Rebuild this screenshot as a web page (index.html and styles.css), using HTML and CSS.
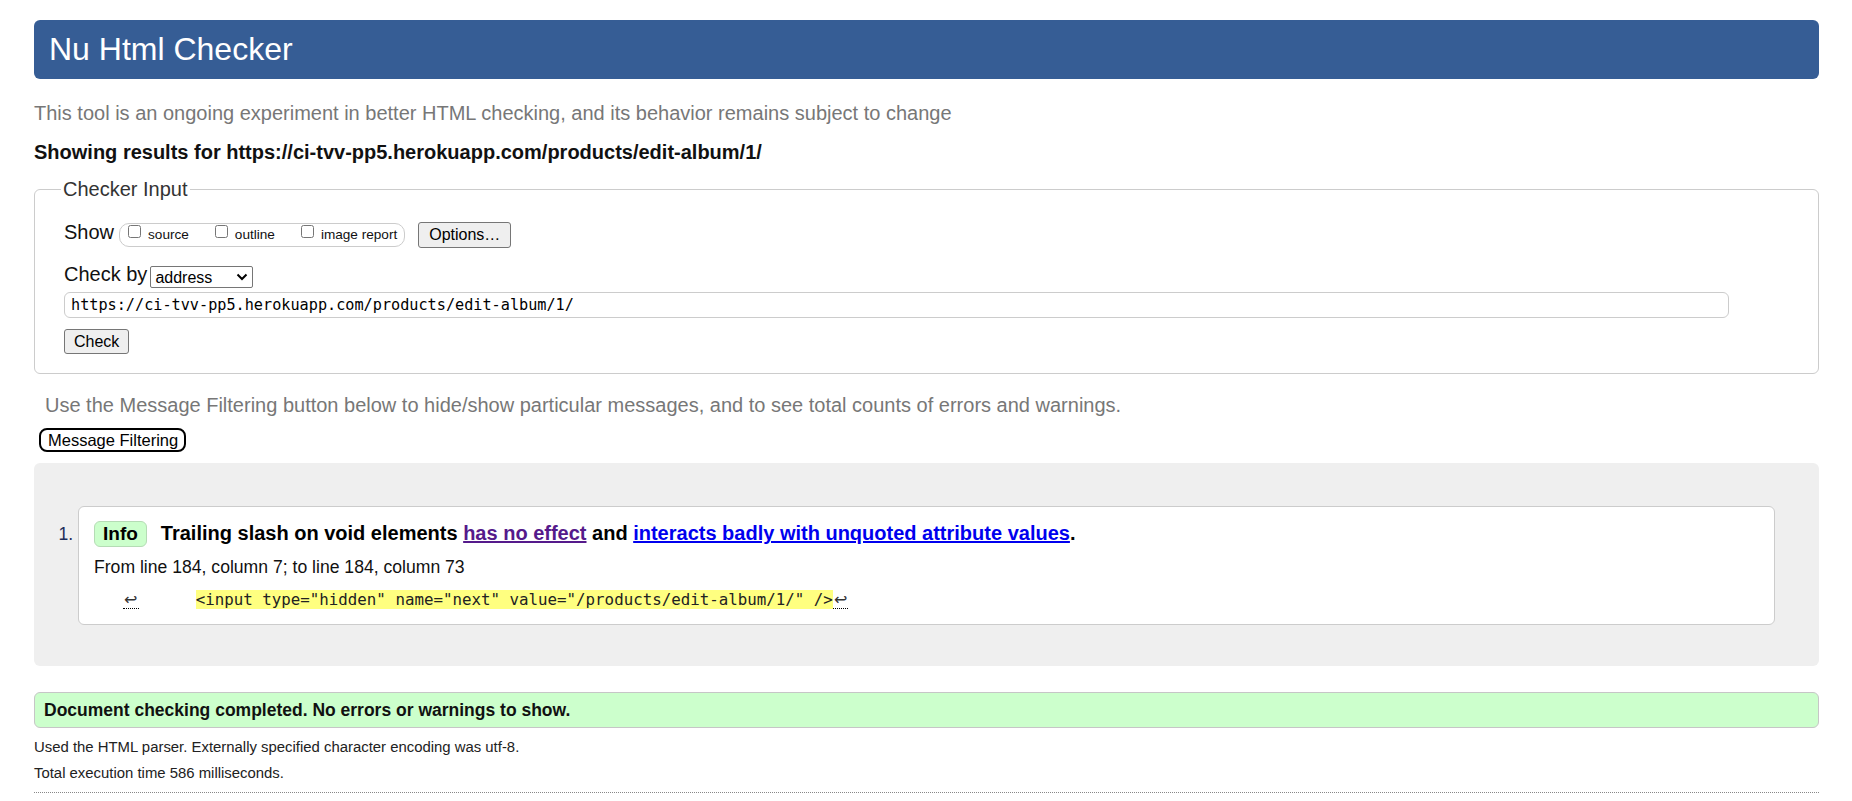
FILE: index.html
```html
<!DOCTYPE html>
<html lang="en">
<head>
<meta charset="utf-8">
<title>Nu Html Checker</title>
<link rel="stylesheet" href="styles.css">
</head>
<body>
<h1 class="title">Nu Html Checker</h1>
<p class="intro">This tool is an ongoing experiment in better HTML checking, and its behavior remains subject to change</p>
<p class="showing">Showing results for https://ci-tvv-pp5.herokuapp.com/products/edit-album/1/</p>
<form class="checker-form">
  <fieldset class="checker">
    <legend class="checker-legend">Checker Input</legend>
    <div class="row show-row">
      <span class="row-label">Show</span>
      <span class="show-pill">
        <label class="opt"><input type="checkbox" class="cb"><span class="opt-text">source</span></label>
        <label class="opt"><input type="checkbox" class="cb"><span class="opt-text">outline</span></label>
        <label class="opt"><input type="checkbox" class="cb"><span class="opt-text">image report</span></label>
      </span>
      <button type="button" class="btn btn-options">Options…</button>
    </div>
    <div class="row checkby-row">
      <span class="row-label">Check by</span>
      <span class="select-wrap">
        <select class="select"><option>address</option></select>
        <svg class="chev" width="12" height="8" viewBox="0 0 12 8"><polyline points="1.5,1.5 6,6 10.5,1.5" fill="none" stroke="#000" stroke-width="2"/></svg>
      </span>
    </div>
    <div class="row url-row">
      <input class="url" type="text" value="https://ci-tvv-pp5.herokuapp.com/products/edit-album/1/">
    </div>
    <div class="row check-row">
      <button type="button" class="btn btn-check">Check</button>
    </div>
  </fieldset>
</form>
<p class="filter-note">Use the Message Filtering button below to hide/show particular messages, and to see total counts of errors and warnings.</p>
<div class="filter-wrap"><button type="button" class="btn-filter">Message Filtering</button></div>
<div class="results">
  <ol class="msgs">
    <li class="msg">
      <div class="msg-head"><strong class="badge">Info</strong><span class="msg-text">Trailing slash on void elements <a class="visited" href="#">has no effect</a> and <a class="link" href="#">interacts badly with unquoted attribute values</a>.</span></div>
      <p class="location">From line 184, column 7; to line 184, column 73</p>
      <p class="extract"><code class="code"><span class="lf">↩</span>      <b class="hl">&lt;input type="hidden" name="next" value="/products/edit-album/1/" /&gt;</b><span class="lf">↩</span></code></p>
    </li>
  </ol>
</div>
<p class="success">Document checking completed. No errors or warnings to show.</p>
<p class="details">Used the HTML parser. Externally specified character encoding was utf-8.</p>
<p class="details details-2">Total execution time 586 milliseconds.</p>
<hr class="dotted">
</body>
</html>
```
FILE: styles.css
```css
html, body {
  margin: 0;
  background: #fff;
}
body {
  padding: 20px 33px 0 34px;
  font-family: "Liberation Sans", Arial, sans-serif;
  font-size: 20px;
  color: #000;
}
.title {
  margin: 0;
  background: #365d95;
  color: #fff;
  font-size: 32px;
  font-weight: normal;
  line-height: 59px;
  padding: 0 15px;
  border-radius: 6px;
}
.intro {
  margin: 23px 0 0;
  color: #777;
  line-height: 23px;
}
.showing {
  margin: 16px 0 0;
  font-weight: bold;
  line-height: 23px;
  color: #111;
}
.checker-form {
  margin: 14px 0 0;
}
.checker {
  margin: 0;
  border: 1px solid #ccc;
  border-radius: 6px;
  padding: 20px 29px 19px 26px;
}
.checker-legend {
  padding: 0 2px;
  font-size: 20px;
  line-height: 23px;
  color: #333;
}
.row {
  padding-left: 3px;
  display: flex;
  align-items: flex-start;
}
.row-label {
  line-height: 23px;
  color: #111;
}
.show-pill {
  margin: 2px 0 0 5px;
  height: 24px;
  box-sizing: border-box;
  border: 1px solid #ccc;
  border-radius: 10px;
  padding: 0 7px 0 8px;
  display: flex;
  gap: 26px;
}
.opt {
  display: flex;
  align-items: flex-start;
}
.cb {
  margin: 1px 7px 0 0;
  width: 13px;
  height: 13px;
}
.opt-text {
  font-size: 13.6px;
  line-height: 16px;
  margin-top: 3px;
  color: #111;
}
.btn {
  font-family: "Liberation Sans", Arial, sans-serif;
  font-size: 16px;
  color: #000;
  background: #efefef;
  border: 1px solid #767676;
  border-radius: 3px;
  box-sizing: border-box;
  margin: 0;
}
.btn-options {
  margin: 1px 0 0 13px;
  height: 26px;
  padding: 0 10px;
}
.checkby-row {
  margin-top: 15px;
}
.select-wrap {
  position: relative;
  margin: 3px 0 0 3px;
  display: block;
  width: 103px;
  height: 22px;
}
.select {
  appearance: none;
  -webkit-appearance: none;
  display: block;
  width: 103px;
  height: 22px;
  box-sizing: border-box;
  border: 1px solid #767676;
  border-radius: 2px;
  background: #fff;
  padding: 0 0 0 4px;
  margin: 0;
  font-family: "Liberation Sans", Arial, sans-serif;
  font-size: 16px;
  color: #000;
}
.chev {
  position: absolute;
  right: 5px;
  top: 7px;
  pointer-events: none;
}
.url-row {
  margin-top: 4px;
}
.url {
  display: block;
  width: calc(100% - 60px);
  height: 26px;
  box-sizing: border-box;
  border: 1px solid #ccc;
  border-radius: 6px;
  padding: 0 6px;
  margin: 0;
  font-family: "DejaVu Sans Mono", "Liberation Mono", monospace;
  font-size: 15.2px;
  color: #000;
  background: #fff;
}
.check-row {
  margin-top: 11px;
}
.btn-check {
  height: 25px;
  padding: 0 9px;
}
.filter-note {
  margin: 20px 0 0;
  padding-left: 11px;
  color: #777;
  line-height: 23px;
}
.filter-wrap {
  margin-top: 11px;
  padding-left: 5px;
}
.btn-filter {
  display: block;
  height: 24px;
  box-sizing: border-box;
  border: 2px solid #000;
  border-radius: 8px;
  background: #fff;
  color: #000;
  font-family: "Liberation Sans", Arial, sans-serif;
  font-size: 16.5px;
  line-height: 20px;
  padding: 0 6px 0 7px;
  margin: 0;
}
.results {
  margin-top: 11px;
  background: #efefef;
  border-radius: 6px;
  padding: 43px 44px 41px 44px;
}
.msgs {
  margin: 0;
  padding: 0;
  list-style: decimal outside;
}
.msg {
  background: #fff;
  border: 1px solid #ccc;
  border-radius: 6px;
  padding: 14px 15px 15px;
  font-size: 16px;
}
.msg::marker {
  color: #1e2d5a;
  font-size: 17.6px;
}
.msg-head {
  display: flex;
  align-items: center;
}
.badge {
  display: block;
  font-size: 19px;
  line-height: 23.7px;
  padding: 0 8px;
  background: #ccffcc;
  border: 1px solid #b5dcb5;
  border-radius: 6px;
  margin-right: 14px;
}
.msg-text {
  font-size: 20px;
  line-height: 23px;
  font-weight: bold;
}
.visited {
  color: #551a8b;
}
.link {
  color: #0000ee;
}
.location {
  margin: 10px 0 0;
  font-size: 17.6px;
  line-height: 20px;
  color: #111;
}
.extract {
  margin: 13px 0 0 29px;
  font-family: "DejaVu Sans Mono", "Liberation Mono", monospace;
  font-size: 15.8px;
  line-height: 19px;
}
.code {
  font-family: inherit;
  white-space: pre;
  color: #222;
}
.lf {
  display: inline-block;
  width: 15.6px;
  text-align: center;
  line-height: 16px;
  border-bottom: 1px dotted #000;
  font-family: "DejaVu Sans", sans-serif;
  font-size: 16px;
  color: #333;
}
.hl {
  font-weight: normal;
  background: #ffff80;
}
.success {
  margin: 26px 0 0;
  height: 36px;
  box-sizing: border-box;
  background: #ccffcc;
  border: 1px solid #c6c6c6;
  border-radius: 6px;
  padding: 0 9px;
  font-size: 17.5px;
  line-height: 34px;
  font-weight: bold;
  color: #111;
}
.details {
  margin: 11px 0 0;
  font-size: 14.9px;
  line-height: 17px;
  color: #222;
}
.details-2 {
  margin-top: 9px;
}
.dotted {
  margin: 10px 0 0;
  border: 0;
  border-top: 1px dotted #888;
  height: 0;
}
```
